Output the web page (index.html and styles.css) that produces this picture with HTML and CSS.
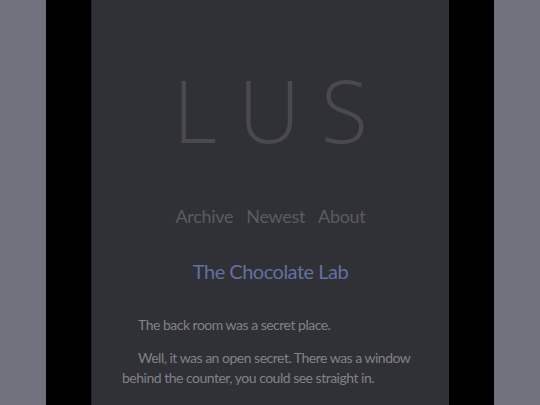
FILE: index.html
```html
<!DOCTYPE html>
<html>
<head>
<meta charset="utf-8">
<link rel="stylesheet" href="styles.css">
</head>
<body>
<div class="page">
  <div class="frame">
    <main class="column">
      <header class="masthead">
        <h1 class="logo">LUS</h1>
        <nav class="nav">
          <a href="#">Archive</a>
          <a href="#">Newest</a>
          <a href="#">About</a>
        </nav>
      </header>
      <article class="post">
        <h2 class="post-title">The Chocolate Lab</h2>
        <p>The back room was a secret place.</p>
        <p>Well, it was an open secret. There was a window behind the counter, you could see straight in.</p>
      </article>
    </main>
  </div>
</div>
</body>
</html>
```
FILE: styles.css
```css
html, body {
  margin: 0;
  padding: 0;
  height: 100%;
  overflow: hidden;
}
body {
  background: #70727d;
  font-family: "Lato", "Open Sans", sans-serif;
}
.page {
  display: flex;
  justify-content: center;
  height: 100%;
}
.frame {
  width: 448px;
  background: #000;
  display: flex;
  justify-content: center;
}
.column {
  width: 358px;
  background: #303136;
  border-left: 1px solid #27282c;
  box-sizing: border-box;
  padding: 0 30px;
}
.masthead {
  text-align: center;
}
.logo {
  margin: 0;
  padding-top: 60px;
  font-family: "Open Sans", sans-serif;
  font-size: 86px;
  font-weight: 300;
  line-height: 100px;
  letter-spacing: 21px;
  color: #4a4a4d;
  padding-left: 21px;
}
.nav {
  margin-top: 44px;
  display: flex;
  justify-content: center;
  gap: 13px;
}
.nav a {
  color: #5a5b62;
  text-decoration: none;
  font-size: 18px;
  line-height: 24px;
  letter-spacing: -0.3px;
}
.post-title {
  margin: 30px 0 31px;
  text-align: center;
  font-size: 20px;
  font-weight: 400;
  line-height: 26px;
  letter-spacing: -0.5px;
  color: #6470a0;
}
.post p {
  margin: 0 0 13px;
  text-indent: 16px;
  font-size: 14px;
  line-height: 20px;
  letter-spacing: -0.5px;
  color: #818288;
}
```
